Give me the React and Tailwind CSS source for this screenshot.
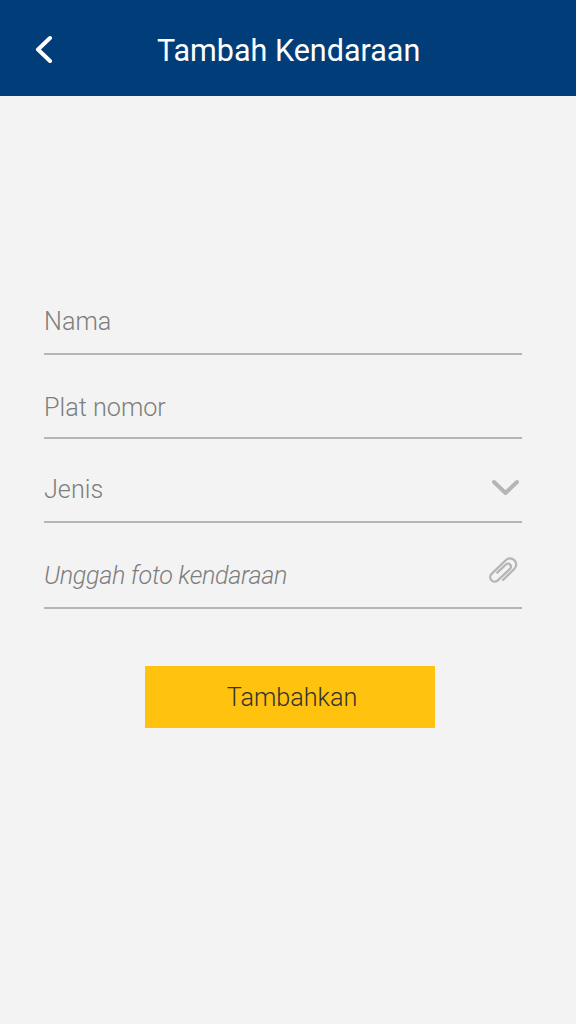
export default function App() {
  return (
    <div className="flex h-[1024px] w-[576px] flex-col bg-[#f3f3f3] font-['Roboto',sans-serif] font-light text-[#7e7e7e]">
      <header className="flex h-24 items-center bg-[#003d79] text-white">
        <button className="ml-[34px] w-[123px]" aria-label="Kembali">
          <svg width="20" height="30" viewBox="0 0 20 30" fill="none" stroke="currentColor" strokeWidth="4" strokeLinecap="round" strokeLinejoin="round"><path d="M16 5 4 16.500 16 28" /></svg>
        </button>
        <h1 className="mt-1.5 text-[30.5px] leading-9 font-normal whitespace-nowrap">Tambah Kendaraan</h1>
      </header>
      <form className="mt-[194px] ml-11 w-[478px] text-[25.2px] leading-8">
        <div className="h-[65px] border-b-2 border-[#b5b5b5] pt-4">Nama</div>
        <div className="h-[84px] border-b-2 border-[#b5b5b5] pt-[37px]">Plat nomor</div>
        <div className="flex h-[84px] justify-between border-b-2 border-[#b5b5b5] pt-[35px]">
          <span>Jenis</span>
          <svg className="mt-1 mr-[2px]" width="30" height="20" viewBox="0 0 30 20" fill="none" stroke="#b5b5b5" strokeWidth="4" strokeLinecap="round" strokeLinejoin="round"><path d="m4 4 11.500 11L27 4" /></svg>
        </div>
        <div className="flex h-[86px] items-start justify-between border-b-2 border-[#b5b5b5] pt-[33px]">
          <span className="mt-1 tracking-[-0.34px] italic">Unggah foto kendaraan</span>
          <svg className="mr-1" width="30" height="28" viewBox="0 0 30 28" fill="none" stroke="#b5b5b5" strokeWidth="2.3" strokeLinecap="round" strokeLinejoin="round">
            <path d="M15 24 26.200 13A6 6 0 0 0 18 4L3.600 17.800A4.500 4.500 0 0 0 9.800 24.400L22 12.900A3 3 0 0 0 17.900 8.500L9.300 16.600" />
          </svg>
        </div>
        <button type="button" className="mt-[57px] ml-[101px] h-[62px] w-[290px] bg-[#ffc20e] pt-0.5 pl-1 text-[#333333]">Tambahkan</button>
      </form>
    </div>
  );
}
